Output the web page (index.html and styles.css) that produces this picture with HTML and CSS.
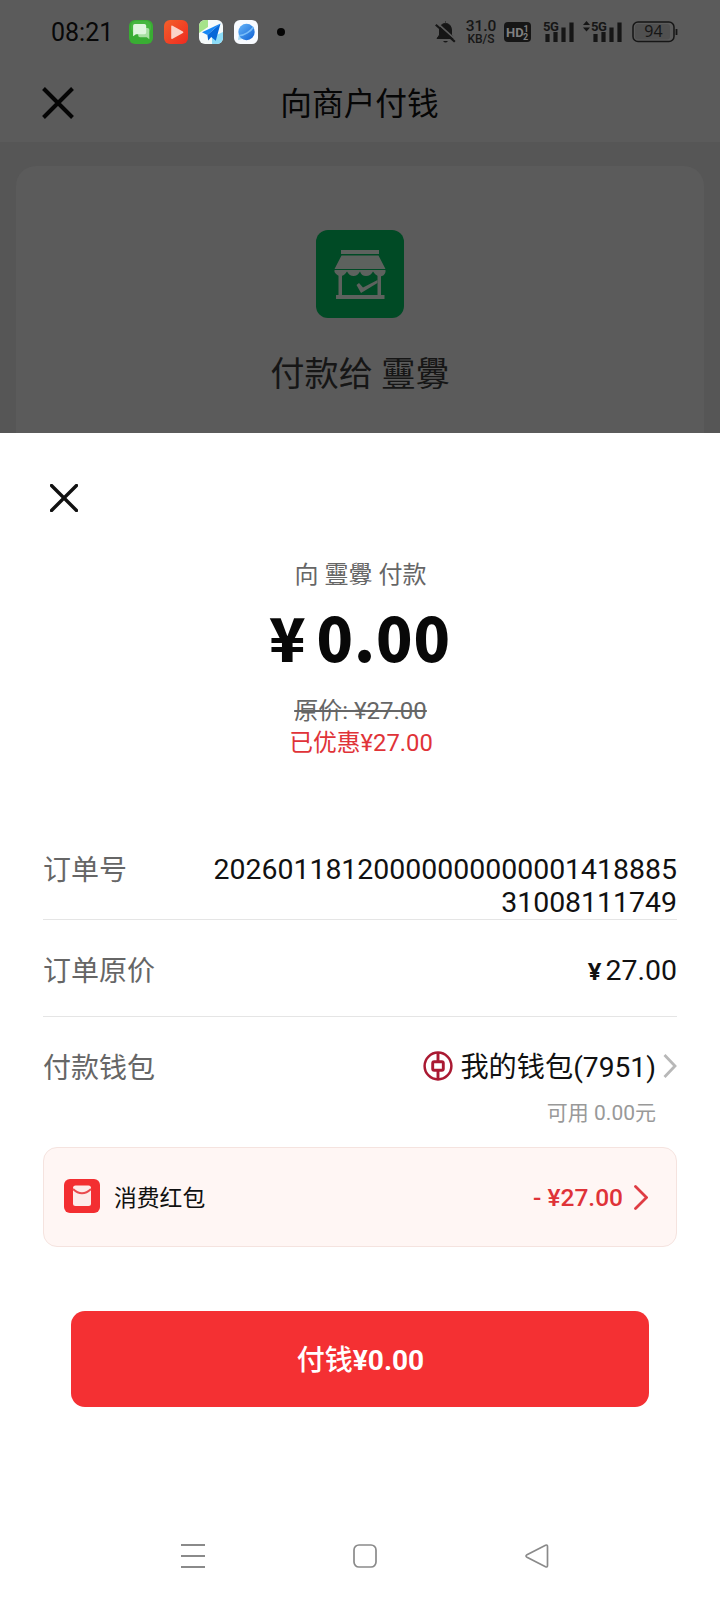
FILE: index.html
```html
<!DOCTYPE html>
<html lang="zh-CN">
<head>
<meta charset="utf-8">
<title>向商户付钱</title>
<link rel="stylesheet" href="styles.css">
</head>
<body>
<div class="screen">
  <div class="backdrop">
    <header class="top">
      <div class="status">
        <span class="clock">08:21</span>
        <div class="apps">
          <svg width="24" height="24" viewBox="0 0 24 24"><rect width="24" height="24" rx="6" fill="#39ad33"/><rect x="2" y="1" width="20" height="12" rx="5" fill="#50bd48" opacity=".6"/><path d="M12 8h6.500q1.800 0 1.800 1.800v9.500l-2.500-2H11q-1.800 0-1.800-1.800V9z" fill="#a8dfa2"/><path d="M5.800 4h9.600q1.800 0 1.800 1.800v6.700q0 1.800-1.800 1.800H7l-2.900 2V5.800Q4.100 4 5.800 4z" fill="#e0f5de"/></svg>
          <svg width="24" height="24" viewBox="0 0 24 24"><defs><linearGradient id="pv" x1="0" y1="0" x2="1" y2="1"><stop offset="0" stop-color="#f4602a"/><stop offset="1" stop-color="#ee2a20"/></linearGradient></defs><rect width="24" height="24" rx="6" fill="url(#pv)"/><path d="M7.200 6.500q0-1.500 1.400-.8l10.300 5.700q1.100.8 0 1.600l-10.300 5.700q-1.400.7-1.400-.8z" fill="#fbd2c8"/></svg>
          <svg width="24" height="24" viewBox="0 0 24 24"><clipPath id="mc"><rect width="24" height="24" rx="6"/></clipPath><g clip-path="url(#mc)"><path fill="#f5fafa" d="M0 0h24v24H0z"/><path d="M0 0h9v7l-9 6z" fill="#a5e38a"/><path d="M13 24V17l11-5v12z" fill="#8cdcf7"/><path d="M21.500 3.500 3 12.200l5.400 2.800z" fill="#1687f5"/><path d="M21.500 3.500 8.400 15l.8 5.500 3-3.400 4.600 3.600z" fill="#0567d8"/></g></svg>
          <svg width="24" height="24" viewBox="0 0 24 24"><defs><linearGradient id="bg" x1="0" y1="0" x2="1" y2="1"><stop offset="0" stop-color="#66b6fa"/><stop offset="1" stop-color="#0d5fd3"/></linearGradient></defs><rect width="24" height="24" rx="6" fill="#f8fbff"/><path d="M5 14 4 20l7-1.500z" fill="#a7dcf8"/><circle cx="12.500" cy="12" r="8.200" fill="url(#bg)"/><path d="M5 15.500C10 16 17 11 19.500 7" fill="none" stroke="#79bdf8" stroke-width="1.500"/></svg>
        </div>
        <i class="dot"></i>
        <div class="signals">
          <svg class="bell" width="21" height="23" viewBox="0 0 21 23"><path d="M10.500 1.500V.5M2 17.500h17l-2.500-3.500V9Q16 2.500 10.500 2.500T4.500 9v5z" fill="#161616" stroke="#161616"/><path d="M8 20h5q-2.500 3-5 0z" fill="#161616"/><path d="m2.300 2.200 19 17" stroke="#5b5b5b" stroke-width="1.800"/><path d="m.8 3.800 19 17" stroke="#161616" stroke-width="2.200"/></svg>
          <div class="rate"><b>31.0</b><span>KB/S</span></div>
          <svg class="hd" width="27" height="20" viewBox="0 0 27 20"><rect width="27" height="20" rx="4" fill="#161616"/><text x="2" y="15" class="hd-text">HD</text><text x="19.500" y="9.500" class="hd-num">1</text><text x="19" y="17.500" class="hd-num">2</text></svg>
          <svg class="bars" width="32" height="28" viewBox="0 -3 32 28"><path d="M4.500 13v8M12.500 11v10M20.500 6.500V21M28.500 1.500V21" stroke="#161616" stroke-width="4.200"/><text x="0" y="10" class="g5">5G</text></svg>
          <svg class="bars2" width="40" height="28" viewBox="0 -3 40 28"><path d="m0 4 3.500-4L7 4zM0 6.500h7l-3.500 4z" fill="#161616"/><path d="M12.500 13v8M20.500 11v10M28.500 6.500V21M36.500 1.500V21" stroke="#161616" stroke-width="4.200"/><text x="8" y="10" class="g5">5G</text></svg>
          <svg class="battery" width="46" height="22" viewBox="0 0 46 22"><rect x="1" y="1" width="41" height="19.500" rx="5" fill="none" stroke="#161616" stroke-width="1.500"/><rect x="3" y="3" width="35" height="15.500" rx="3" fill="#505050"/><path d="M44.500 8v6" stroke="#161616" stroke-width="1.800"/><text x="21.500" y="16" text-anchor="middle" class="bat-text">94</text></svg>
        </div>
      </div>
      <div class="titlebar">
        <svg class="close-page" width="32" height="32" viewBox="0 0 32 32"><path d="m1.500 1.500 29 29m0-29-29 29" stroke="#050505" stroke-width="4"/></svg>
        <h1>向商户付钱</h1>
      </div>
    </header>
    <section class="merchant">
      <svg class="shop" width="88" height="88" viewBox="0 0 88 88"><rect width="88" height="88" rx="12" fill="#004a25"/><g fill="#5d625e"><path d="M25 20h38v4H25zM25.500 25.500h37L69.500 39h-51z"/><path d="M18.500 40h51v2q-1 4-5.500 4.500Q60 46 57 41.500q-2.500 4.500-7 4.500T44 41.500q-2.500 4.500-6.500 4.500T31 41.500Q28 46 24.500 46t-6-4z"/><path d="M22.500 44h3.500v21h-3.500zM61.500 44H65v21h-3.500zM20 65h48.500v4H20z"/><path d="m40.500 55 2.500-2 4 4.500L61.500 50v3L45 63z"/></g></svg>
      <p>付款给 靊釁</p>
    </section>
  </div>

  <main class="sheet">
    <svg class="close-sheet" width="28" height="28" viewBox="0 0 28 28"><path d="m1.500 1.500 25 25m0-25-25 25" stroke="#111" stroke-width="3.400" stroke-linecap="round"/></svg>
    <p class="payee">向 靊釁 付款</p>
    <p class="amount"><span class="yen">¥</span>0.00</p>
    <p class="was">原价: ¥27.00</p>
    <p class="saved">已优惠¥27.00</p>

    <div class="rows">
      <div class="row order"><span class="label">订单号</span><span class="value">20260118120000000000001418885<br>31008111749</span></div>
      <div class="row price"><span class="label">订单原价</span><span class="value"><b>¥</b>27.00</span></div>
      <div class="row wallet">
        <span class="label">付款钱包</span>
        <span class="account">
          <svg class="bank" width="30" height="30" viewBox="0 0 30 30" fill="none" stroke="#aa1932"><circle cx="15" cy="15" r="13.400" stroke-width="2.500"/><rect x="9.700" y="10.700" width="10.600" height="8.600" rx="1.500" stroke-width="2.900"/><path d="M15 2v8M15 20v8" stroke-width="2.900"/></svg>
          <span class="value">我的钱包(7951)</span>
          <svg class="arrow" width="14" height="26" viewBox="0 0 14 26"><path d="m1.500 2 10.500 11L1.500 24" fill="none" stroke="#b8b8b8" stroke-width="2.800"/></svg>
        </span>
      </div>
      <p class="balance">可用 0.00元</p>
    </div>

    <div class="coupon">
      <svg class="packet" width="36" height="34" viewBox="0 0 36 34"><rect width="36" height="34" rx="6" fill="#f32e31"/><rect x="9" y="6.500" width="18" height="20.500" rx="2.500" fill="#fdebea"/><path d="M9 10q9 8.500 18 0" fill="none" stroke="#e94a4e" stroke-width="2"/></svg>
      <span class="coupon-name">消费红包</span>
      <span class="coupon-value">- ¥27.00</span>
      <svg width="14" height="25" viewBox="0 0 14 25"><path d="m1.500 1.500 11 11-11 11" fill="none" stroke="#df3c43" stroke-width="2.800" stroke-linecap="round"/></svg>
    </div>

    <button class="pay">付钱<b>¥0.00</b></button>

    <nav class="system">
      <svg width="24" height="24" viewBox="0 0 24 24"><path d="M0 1h24M0 12h24M0 23h24" stroke="#8a8a8a" stroke-width="1.800"/></svg>
      <svg width="24" height="24" viewBox="0 0 24 24"><rect x="1" y="1" width="22" height="22" rx="5" fill="none" stroke="#8a8a8a" stroke-width="1.700"/></svg>
      <svg width="24" height="24" viewBox="0 0 24 24"><path d="M2 10.800 20.500 1.200q2-.7 2 1.300v19q0 2-2 1.300L2 13.200q-2-1.200 0-2.400z" fill="none" stroke="#8a8a8a" stroke-width="1.700"/></svg>
    </nav>
  </main>
</div>
</body>
</html>
```
FILE: styles.css
```css
* { box-sizing: border-box; }
body { margin: 0; }
p, h1 { margin: 0; font-weight: 400; }
svg { display: block; flex: none; }

.screen {
  width: 720px;
  height: 1600px;
  overflow: hidden;
  font-family: Roboto, "Noto Sans CJK SC", sans-serif;
  color: #111;
}

.backdrop { height: 433px; background: #565656; overflow: hidden; }
.top { height: 142px; background: #5b5b5b; }

.status { height: 64px; padding-left: 51px; display: flex; align-items: center; }
.clock { width: 78px; padding-top: 2px; font-size: 25px; line-height: 30px; color: #080808; white-space: nowrap; }
.apps { display: flex; gap: 11px; }
.dot { width: 8px; height: 8px; margin-left: 19px; border-radius: 50%; background: #050505; }
.signals { display: flex; align-items: center; margin-left: 150px; color: #161616; }
.rate { width: 30px; margin-left: 10px; display: flex; flex-direction: column; align-items: center; }
.rate b { font: 500 15.500px/14px Roboto, sans-serif; }
.rate span { font: 500 12px/12px Roboto, sans-serif; }
.hd { margin-left: 8px; }
.bars { margin-left: 12px; }
.bars2 { margin-left: 8px; }
.battery { margin-left: 9px; }
.hd-text { font: 700 13px Roboto, sans-serif; fill: #808080; }
.hd-num { font: 700 9px Roboto, sans-serif; fill: #808080; }
.g5 { font: 700 13px Roboto, sans-serif; letter-spacing: -.5px; fill: #161616; stroke: #5b5b5b; stroke-width: 1.500px; paint-order: stroke; }
.bat-text { font: 400 16px "Noto Sans", sans-serif; fill: #161616; }

.titlebar { height: 78px; padding-left: 43px; display: grid; grid-template-columns: 32px 569px; align-items: center; }
.titlebar h1 { padding-top: 4px; text-align: center; font-size: 31.700px; line-height: 40px; color: #060606; }
.close-page { margin-left: -1px; }

.merchant {
  height: 300px;
  margin: 24px 16px 0;
  padding-top: 64px;
  border-radius: 20px;
  background: #5b5b5b;
  display: flex;
  flex-direction: column;
  align-items: center;
}
.merchant p { margin-top: 36px; font-size: 34.200px; line-height: 40px; color: #161616; }

.sheet { height: 1167px; padding: 50px 43px 0; background: #fff; display: flex; flex-direction: column; }
.close-sheet { margin: 1px 0 0 7px; }
.payee { margin-top: 47px; padding-left: 1px; font-size: 24px; line-height: 32px; text-align: center; color: #666; }
.amount {
  margin-top: 9px;
  height: 72px;
  display: flex;
  justify-content: center;
  align-items: center;
  font: 900 60px/72px "Noto Sans CJK SC", sans-serif;
  letter-spacing: 1px;
  color: #080808;
}
.yen { margin-right: 10px; }
.was { margin-top: 23px; padding-left: 1px; font-size: 24px; line-height: 32px; text-align: center; color: #666; text-decoration: line-through; }
.saved { padding-left: 2px; font-size: 23.800px; line-height: 32px; text-align: center; color: #e03338; }

.rows { margin-top: 93px; font-size: 28px; }
.row { display: flex; justify-content: space-between; }
.label { padding-top: 2px; color: #666; line-height: 34px; }
.value { padding-top: 1px; font-size: 28.450px; line-height: 33px; text-align: right; }
.order { height: 68px; border-bottom: 1px solid #e5e5e5; }
.price { height: 97px; padding-top: 33px; border-bottom: 1px solid #e5e5e5; }
.price b { margin-right: 4px; font: 700 24px/24px "Noto Sans", sans-serif; }
.wallet { padding-top: 33px; height: 67px; }
.account { display: flex; align-items: center; height: 34px; }
.bank { margin-bottom: 3px; }
.account .value { margin-left: 7px; font-size: 28.200px; }
.arrow { margin: 0 0 2px 7px; }
.balance { margin-top: 16px; padding-right: 21px; font-size: 21px; line-height: 26px; text-align: right; color: #999; }

.coupon {
  height: 100px;
  margin-top: 21px;
  padding: 0 28px 0 20px;
  display: flex;
  align-items: center;
  border: 1px solid #f5e3df;
  border-radius: 14px;
  background: #fff6f4;
}
.packet { margin-bottom: 2px; }
.coupon-name { margin-left: 14px; padding-bottom: 1px; font-size: 22.800px; }
.coupon-value { margin: 0 11px 0 auto; font-size: 24.500px; font-weight: 500; color: #df3338; }

.pay {
  height: 96px;
  margin: 64px 28px 0;
  padding: 0 0 2px 1px;
  border: 0;
  border-radius: 14px;
  background: #f43033;
  color: #fff;
  font: 500 28px Roboto, "Noto Sans CJK SC", sans-serif;
}
.pay b { font-weight: 700; }

.system { margin-top: 137px; padding: 0 128px 0 138px; display: flex; justify-content: space-between; }
```
